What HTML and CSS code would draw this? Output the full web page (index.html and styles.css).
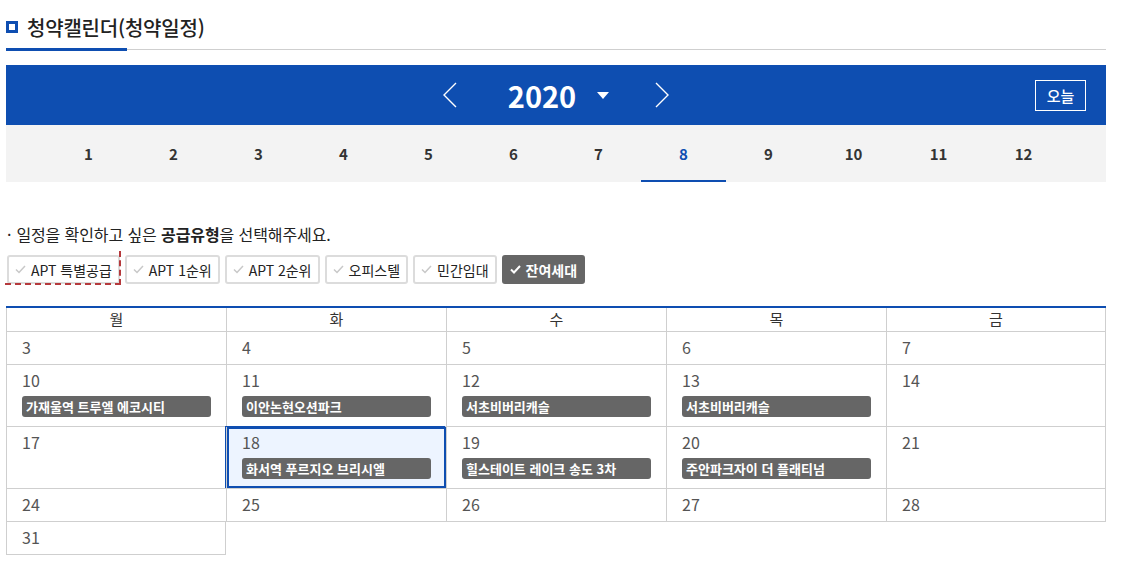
FILE: index.html
```html
<!DOCTYPE html>
<html lang="ko">
<head>
<meta charset="utf-8">
<title>청약캘린더</title>
<link rel="stylesheet" href="styles.css">
</head>
<body>
<div class="page">
  <div class="title-bar">
    <h2 class="title"><span class="title-icon"></span>청약캘린더(청약일정)</h2>
  </div>

  <div class="year-bar">
    <div class="year-nav">
      <button class="arrow" aria-label="이전">
        <svg width="16" height="26" viewBox="0 0 16 26"><polyline points="14,1 2,13 14,25" fill="none" stroke="#fff" stroke-width="1.4"/></svg>
      </button>
      <span class="year">2020</span>
      <span class="caret"></span>
      <button class="arrow" aria-label="다음">
        <svg width="16" height="26" viewBox="0 0 16 26"><polyline points="2,1 14,13 2,25" fill="none" stroke="#fff" stroke-width="1.4"/></svg>
      </button>
    </div>
    <button class="today">오늘</button>
  </div>

  <ul class="months">
    <li>1</li><li>2</li><li>3</li><li>4</li><li>5</li><li>6</li>
    <li>7</li><li class="active">8</li><li>9</li><li>10</li><li>11</li><li>12</li>
  </ul>

  <p class="guide"><span class="dot">·</span>일정을 확인하고 싶은 <b>공급유형</b>을 선택해주세요.</p>

  <div class="filters">
    <button class="chip focus"><svg class="chk" width="11" height="9" viewBox="0 0 11 9"><polyline points="1,4.5 4,7.5 10,1" fill="none" stroke="currentColor" stroke-width="1.5"/></svg>APT 특별공급</button>
    <button class="chip"><svg class="chk" width="11" height="9" viewBox="0 0 11 9"><polyline points="1,4.5 4,7.5 10,1" fill="none" stroke="currentColor" stroke-width="1.5"/></svg>APT 1순위</button>
    <button class="chip"><svg class="chk" width="11" height="9" viewBox="0 0 11 9"><polyline points="1,4.5 4,7.5 10,1" fill="none" stroke="currentColor" stroke-width="1.5"/></svg>APT 2순위</button>
    <button class="chip"><svg class="chk" width="11" height="9" viewBox="0 0 11 9"><polyline points="1,4.5 4,7.5 10,1" fill="none" stroke="currentColor" stroke-width="1.5"/></svg>오피스텔</button>
    <button class="chip"><svg class="chk" width="11" height="9" viewBox="0 0 11 9"><polyline points="1,4.5 4,7.5 10,1" fill="none" stroke="currentColor" stroke-width="1.5"/></svg>민간임대</button>
    <button class="chip on"><svg class="chk" width="11" height="9" viewBox="0 0 11 9"><polyline points="1,4.5 4,7.5 10,1" fill="none" stroke="currentColor" stroke-width="2"/></svg>잔여세대</button>
  </div>

  <div class="cal">
    <div class="hd">월</div><div class="hd">화</div><div class="hd">수</div><div class="hd">목</div><div class="hd last">금</div>

    <div class="day"><span class="num">3</span></div>
    <div class="day"><span class="num">4</span></div>
    <div class="day"><span class="num">5</span></div>
    <div class="day"><span class="num">6</span></div>
    <div class="day last"><span class="num">7</span></div>

    <div class="day"><span class="num">10</span><span class="ev">가재울역 트루엘 에코시티</span></div>
    <div class="day"><span class="num">11</span><span class="ev">이안논현오션파크</span></div>
    <div class="day"><span class="num">12</span><span class="ev">서초비버리캐슬</span></div>
    <div class="day"><span class="num">13</span><span class="ev">서초비버리캐슬</span></div>
    <div class="day last"><span class="num">14</span></div>

    <div class="day"><span class="num">17</span></div>
    <div class="day sel"><span class="num">18</span><span class="ev">화서역 푸르지오 브리시엘</span></div>
    <div class="day"><span class="num">19</span><span class="ev">힐스테이트 레이크 송도 3차</span></div>
    <div class="day"><span class="num">20</span><span class="ev">주안파크자이 더 플래티넘</span></div>
    <div class="day last"><span class="num">21</span></div>

    <div class="day"><span class="num">24</span></div>
    <div class="day"><span class="num">25</span></div>
    <div class="day"><span class="num">26</span></div>
    <div class="day"><span class="num">27</span></div>
    <div class="day last"><span class="num">28</span></div>

    <div class="day last"><span class="num">31</span></div>
  </div>
</div>
</body>
</html>
```

FILE: styles.css
```css
* { box-sizing: border-box; }
body {
  margin: 0;
  font-family: "Noto Sans CJK KR", "Noto Sans", sans-serif;
  color: #333;
  background: #fff;
}
.page {
  width: 1100px;
  margin-left: 6px;
}
button { font-family: inherit; cursor: pointer; }

/* title */
.title-bar {
  position: relative;
  height: 50px;
  border-bottom: 1px solid #cfcfcf;
}
.title-bar::after {
  content: "";
  position: absolute;
  left: 0;
  bottom: -2px;
  width: 121px;
  height: 3px;
  background: #0e4eb1;
}
.title {
  margin: 0;
  display: flex;
  align-items: center;
  gap: 9px;
  height: 54px;
  font-size: 20px;
  font-weight: 500;
  color: #222;
  letter-spacing: -0.2px;
}
.title-icon {
  width: 12px;
  height: 12px;
  border: 3px solid #0e4eb1;
  flex: none;
}

/* year bar */
.year-bar {
  margin-top: 15px;
  height: 60px;
  background: #0e4eb1;
  display: grid;
  grid-template-columns: 1fr auto 1fr;
  align-items: center;
}
.year-nav {
  grid-column: 2;
  display: flex;
  align-items: center;
}
.arrow {
  background: none;
  border: 0;
  padding: 0;
  width: 16px;
  height: 26px;
  display: flex;
}
.year {
  margin: 0 21px 0 50px;
  font-size: 29px;
  font-weight: 700;
  color: #fff;
  line-height: 40px;
}
.caret {
  width: 0;
  height: 0;
  border-left: 6px solid transparent;
  border-right: 6px solid transparent;
  border-top: 7px solid #fff;
  margin-right: 45px;
}
.today {
  justify-self: end;
  margin-right: 20px;
  width: 51px;
  height: 31px;
  background: transparent;
  border: 1px solid #fff;
  color: #fff;
  font-size: 15px;
  font-weight: 500;
  padding: 0;
}

/* months */
.months {
  list-style: none;
  margin: 0;
  padding: 0 40px;
  height: 57px;
  background: #f3f3f3;
  display: flex;
}
.months li {
  width: 85px;
  display: flex;
  align-items: center;
  justify-content: center;
  font-size: 15px;
  font-weight: 700;
  color: #333;
}
.months li.active {
  color: #0e4eb1;
  border-bottom: 2px solid #0e4eb1;
  padding-top: 2px;
}

/* guide */
.guide {
  margin: 42px 0 0 0;
  font-size: 16px;
  line-height: 20px;
  color: #222;
  padding-left: 1px;
  letter-spacing: -0.1px;
}
.guide .dot { margin-right: 5px; }
.guide b { font-weight: 700; }

/* filters */
.filters {
  margin-top: 11px;
  margin-left: 1px;
  display: flex;
  gap: 5px;
}
.chip {
  position: relative;
  height: 29px;
  display: flex;
  align-items: center;
  gap: 5px;
  padding: 0 6px;
  border: 2px solid #dcdcdc;
  border-radius: 3px;
  background: #fff;
  color: #222;
  font-size: 14px;
}
.chip .chk { color: #c8c8c8; }
.chip.on {
  background: #666;
  border-color: #666;
  color: #fff;
  font-weight: 700;
}
.chip.on .chk { color: #fff; }
.chip.focus::after {
  content: "";
  position: absolute;
  right: -3px;
  bottom: -3px;
  width: 114px;
  height: 32px;
  border-right: 2px dashed #b5393c;
  border-bottom: 2px dashed #b5393c;
  pointer-events: none;
}

/* calendar */
.cal {
  margin-top: 22px;
  border-top: 2px solid #0e4eb1;
  display: grid;
  grid-template-columns: repeat(5, 1fr);
}
.hd {
  height: 24px;
  line-height: 22px;
  text-align: center;
  font-size: 15px;
  color: #333;
  border-left: 1px solid #cfcfcf;
  border-bottom: 1px solid #cfcfcf;
}
.hd.last { border-right: 1px solid #cfcfcf; }
.day {
  display: flex;
  flex-direction: column;
  align-items: stretch;
  padding: 5px 15px 7px 15px;
  border-left: 1px solid #cfcfcf;
  border-bottom: 1px solid #cfcfcf;
}
.day.last { border-right: 1px solid #cfcfcf; }
.num {
  font-size: 16px;
  line-height: 20px;
  color: #555;
}
.ev {
  margin: 6px 0 2px;
  height: 21px;
  line-height: 21px;
  padding-left: 4px;
  background: #666;
  border-radius: 3px;
  color: #fff;
  font-size: 13px;
  font-weight: 700;
  white-space: nowrap;
  overflow: hidden;
}
.day.sel {
  background: #edf4ff;
  box-shadow: inset 0 0 0 2px #0e4eb1, -1px -1px 0 0 #0e4eb1;
  position: relative;
}
```
